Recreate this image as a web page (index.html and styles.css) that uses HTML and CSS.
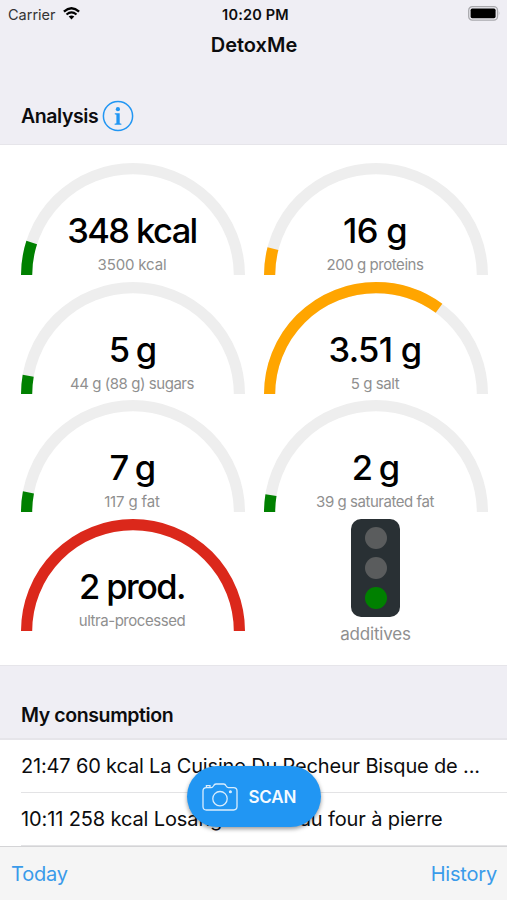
FILE: index.html
```html
<!DOCTYPE html>
<html lang="en">
<head>
    <meta charset="UTF-8">
    <meta name="viewport" content="width=device-width, initial-scale=1.0">

    <link rel="stylesheet" href="styles.css">
    <title>DetoxMe</title>
</head>
<body>
    <div class="status-bar">
        <div class="carrier">
            <span>Carrier</span>
            <svg class="wifi" width="17" height="13" viewBox="0 0 17 13">
                <path d="M0.9 4.6 Q8.5 -2.2 16.1 4.6" fill="none" stroke="#000" stroke-width="2.3"/>
                <path d="M3.5 7.5 Q8.5 3.2 13.5 7.5" fill="none" stroke="#000" stroke-width="2.1"/>
                <path d="M5.7 9.6 Q8.5 7.2 11.3 9.6 L8.5 12.4 Z"/>
            </svg>
        </div>
        <div class="time">10:20 PM</div>
        <svg class="battery" width="33" height="15" viewBox="0 0 33 15">
            <rect x="0.7" y="0.7" width="28.8" height="13.4" rx="3.6" fill="none" stroke="#a9a9ad" stroke-width="1.3"/>
            <rect x="2.6" y="2.6" width="25" height="9.6" rx="1.6"/>
            <path d="M30.8 5 Q32.4 7.4 30.8 9.8 Z" fill="#a9a9ad"/>
        </svg>
    </div>

    <h1>DetoxMe</h1>

    <div class="section-title analysis-title">
        <h2>Analysis</h2>
        <svg width="32" height="32" viewBox="0 0 32 32">
            <circle cx="16" cy="16" r="14.6" fill="none" stroke="#2196f3" stroke-width="1.5"/>
            <circle cx="15.9" cy="9.2" r="2.1" fill="#2196f3"/>
            <path d="M12.8 13.3 H17.7 V23.2 L19.4 23.7 V24.7 H12.6 V23.7 L14.4 23.2 V14.7 L12.8 14.3 Z" fill="#2196f3"/>
        </svg>
    </div>

    <div class="gauges">
        <div class="gauge">
            <svg viewBox="0 0 224 112">
                <path class="track" d="M5.6 112 A106.4 106.4 0 0 1 218.4 112"/>
                <path class="bar green" pathLength="100" stroke-dasharray="9.9 200" d="M5.6 112 A106.4 106.4 0 0 1 218.4 112"/>
            </svg>
            <div class="gauge-text">
                <div class="value word">348 kcal</div>
                <div class="limit number">3500 kcal</div>
            </div>
        </div>
        <div class="gauge">
            <svg viewBox="0 0 224 112">
                <path class="track" d="M5.6 112 A106.4 106.4 0 0 1 218.4 112"/>
                <path class="bar orange" pathLength="100" stroke-dasharray="8 200" d="M5.6 112 A106.4 106.4 0 0 1 218.4 112"/>
            </svg>
            <div class="gauge-text">
                <div class="value">16 g</div>
                <div class="limit">200 g proteins</div>
            </div>
        </div>
        <div class="gauge">
            <svg viewBox="0 0 224 112">
                <path class="track" d="M5.6 112 A106.4 106.4 0 0 1 218.4 112"/>
                <path class="bar green" pathLength="100" stroke-dasharray="5.5 200" d="M5.6 112 A106.4 106.4 0 0 1 218.4 112"/>
            </svg>
            <div class="gauge-text">
                <div class="value short">5 g</div>
                <div class="limit">44 g (88 g) sugars</div>
            </div>
        </div>
        <div class="gauge">
            <svg viewBox="0 0 224 112">
                <path class="track" d="M5.6 112 A106.4 106.4 0 0 1 218.4 112"/>
                <path class="bar orange" pathLength="100" stroke-dasharray="70.2 200" d="M5.6 112 A106.4 106.4 0 0 1 218.4 112"/>
            </svg>
            <div class="gauge-text">
                <div class="value">3.51 g</div>
                <div class="limit">5 g salt</div>
            </div>
        </div>
        <div class="gauge">
            <svg viewBox="0 0 224 112">
                <path class="track" d="M5.6 112 A106.4 106.4 0 0 1 218.4 112"/>
                <path class="bar green" pathLength="100" stroke-dasharray="5.9 200" d="M5.6 112 A106.4 106.4 0 0 1 218.4 112"/>
            </svg>
            <div class="gauge-text">
                <div class="value short">7 g</div>
                <div class="limit number">117 g fat</div>
            </div>
        </div>
        <div class="gauge">
            <svg viewBox="0 0 224 112">
                <path class="track" d="M5.6 112 A106.4 106.4 0 0 1 218.4 112"/>
                <path class="bar green" pathLength="100" stroke-dasharray="5.1 200" d="M5.6 112 A106.4 106.4 0 0 1 218.4 112"/>
            </svg>
            <div class="gauge-text">
                <div class="value short">2 g</div>
                <div class="limit">39 g saturated fat</div>
            </div>
        </div>
        <div class="gauge">
            <svg viewBox="0 0 224 112">
                <path class="bar red" d="M5.6 112 A106.4 106.4 0 0 1 218.4 112"/>
            </svg>
            <div class="gauge-text">
                <div class="value word">2 prod.</div>
                <div class="limit">ultra-processed</div>
            </div>
        </div>
        <div class="additives">
            <div class="traffic-light">
                <div class="light"></div>
                <div class="light"></div>
                <div class="light on"></div>
            </div>
            <div class="additives-label">additives</div>
        </div>
    </div>

    <div class="section-title consumption-title">
        <h2>My consumption</h2>
    </div>

    <div class="list">
        <div class="item">21:47 60 kcal La Cuisine Du Pecheur Bisque de ...</div>
        <div class="item second">10:11 258 kcal Losanges cuits au four à pierre</div>
    </div>

    <div class="scan">
        <svg width="36" height="28" viewBox="0 0 36 28" fill="none" stroke="#d9edfd" stroke-width="1.3">
            <path d="M4.4 4.6 H9.2 Q10.5 4.6 11.4 3 Q12.4 1 14 1 H21.6 Q23.2 1 24.2 3 Q25.1 4.6 26.4 4.6 H31.6 Q35 4.6 35 8 V23.6 Q35 27 31.6 27 H4.4 Q1 27 1 23.6 V8 Q1 4.6 4.4 4.6"/>
            <path d="M4.4 4.4 V2.6 H8 V4.4"/>
            <circle cx="18" cy="15.7" r="7.2"/>
            <circle cx="28.4" cy="8.7" r="0.9" fill="#d9edfd"/>
        </svg>
        <span>SCAN</span>
    </div>

    <div class="toolbar">
        <a class="today">Today</a>
        <a class="history">History</a>
    </div>
</body>
</html>
```
FILE: styles.css
```css
* {
  box-sizing: border-box;
  margin: 0;
  padding: 0;
}

body {
  font-family: Inter, "Liberation Sans", sans-serif;
  background: #efeef4;
  color: #0c0c0e;
  height: 900px;
  display: flex;
  flex-direction: column;
  overflow: hidden;
  white-space: nowrap;
}

svg {
  display: block;
}

.status-bar {
  height: 28px;
  padding: 0 6px 0 8px;
  display: grid;
  grid-template-columns: 1fr auto 1fr;
  align-items: center;
  font-size: 14.5px;
}

.carrier {
  display: flex;
  align-items: center;
  gap: 7px;
  color: #333;
}

.wifi {
  margin-top: -2px;
}

.time {
  padding-left: 2px;
  font-weight: 600;
  letter-spacing: 0.2px;
}

.battery {
  justify-self: end;
  margin-top: -2px;
}

h1 {
  height: 34px;
  line-height: 34px;
  padding-left: 1px;
  text-align: center;
  font-size: 20px;
  font-weight: 600;
}

h2 {
  font-size: 19.5px;
  font-weight: 600;
  letter-spacing: -0.4px;
}

.section-title {
  display: flex;
  align-items: center;
  padding-left: 21px;
}

.analysis-title {
  height: 83px;
  padding-top: 26px;
  gap: 3.5px;
  border-bottom: 1px solid #e6e5ea;
}

.gauges {
  height: 520px;
  padding: 18px 20.5px 0;
  background: #fff;
  display: grid;
  grid-template-columns: 224px 224px;
  grid-auto-rows: 112px;
  column-gap: 19px;
  row-gap: 6.6px;
}

.gauge {
  display: grid;
}

.gauge > * {
  grid-area: 1 / 1;
}

.track,
.bar {
  fill: none;
  stroke-width: 11.2;
}

.track {
  stroke: #eee;
}

.green {
  stroke: #008000;
}

.orange {
  stroke: #ffa500;
}

.red {
  stroke: #db281b;
}

.gauge-text {
  padding-top: 47px;
  padding-right: 1px;
  text-align: center;
}

.value {
  height: 42px;
  line-height: 42px;
  font-size: 34.5px;
  font-weight: 500;
  letter-spacing: -0.7px;
  color: #000;
}

.value.word {
  letter-spacing: -1.6px;
}

.value.short {
  letter-spacing: -1.8px;
}

.limit {
  height: 24px;
  line-height: 25px;
  font-size: 15px;
  letter-spacing: -0.45px;
  color: #8f8f8f;
}

.limit.number {
  letter-spacing: -0.15px;
}

.additives {
  display: flex;
  flex-direction: column;
  align-items: center;
}

.traffic-light {
  width: 49px;
  height: 98px;
  flex: none;
  border-radius: 10px;
  background: #293034;
  padding-top: 8px;
  display: flex;
  flex-direction: column;
  align-items: center;
  gap: 8px;
}

.light {
  width: 22px;
  height: 22px;
  border-radius: 50%;
  background: #5a5c5d;
}

.light.on {
  background: #008000;
}

.additives-label {
  margin-top: 7px;
  line-height: 20px;
  font-size: 17px;
  letter-spacing: -0.2px;
  color: #8f8f8f;
}

.consumption-title {
  height: 75px;
  padding-top: 26px;
  border-top: 1px solid #e6e5ea;
  border-bottom: 2px solid #e6e5ea;
}

.list {
  height: 106px;
  padding-left: 21px;
  background: #fff;
}

.item {
  height: 53px;
  line-height: 52px;
  font-size: 20px;
  letter-spacing: -0.17px;
  border-bottom: 1px solid #e3e3e5;
}

.item.second {
  letter-spacing: -0.12px;
}

.toolbar {
  flex: 1;
  padding: 0 10px 0 11px;
  display: flex;
  justify-content: space-between;
  align-items: center;
  border-top: 1px solid #d4d4d6;
  background: #f5f5f5;
  color: #3a9bea;
  font-size: 20px;
  letter-spacing: -0.2px;
}

/* floats over the list */
.scan {
  position: absolute;
  left: 187px;
  top: 766px;
  width: 134px;
  height: 61px;
  padding-left: 14.5px;
  border-radius: 31px;
  background: #2196f3;
  box-shadow: 0 2px 4px rgba(0, 0, 0, 0.4);
  display: flex;
  align-items: center;
  gap: 11px;
  color: #f4faff;
  font-size: 17px;
  font-weight: 600;
  letter-spacing: -0.2px;
}
```
